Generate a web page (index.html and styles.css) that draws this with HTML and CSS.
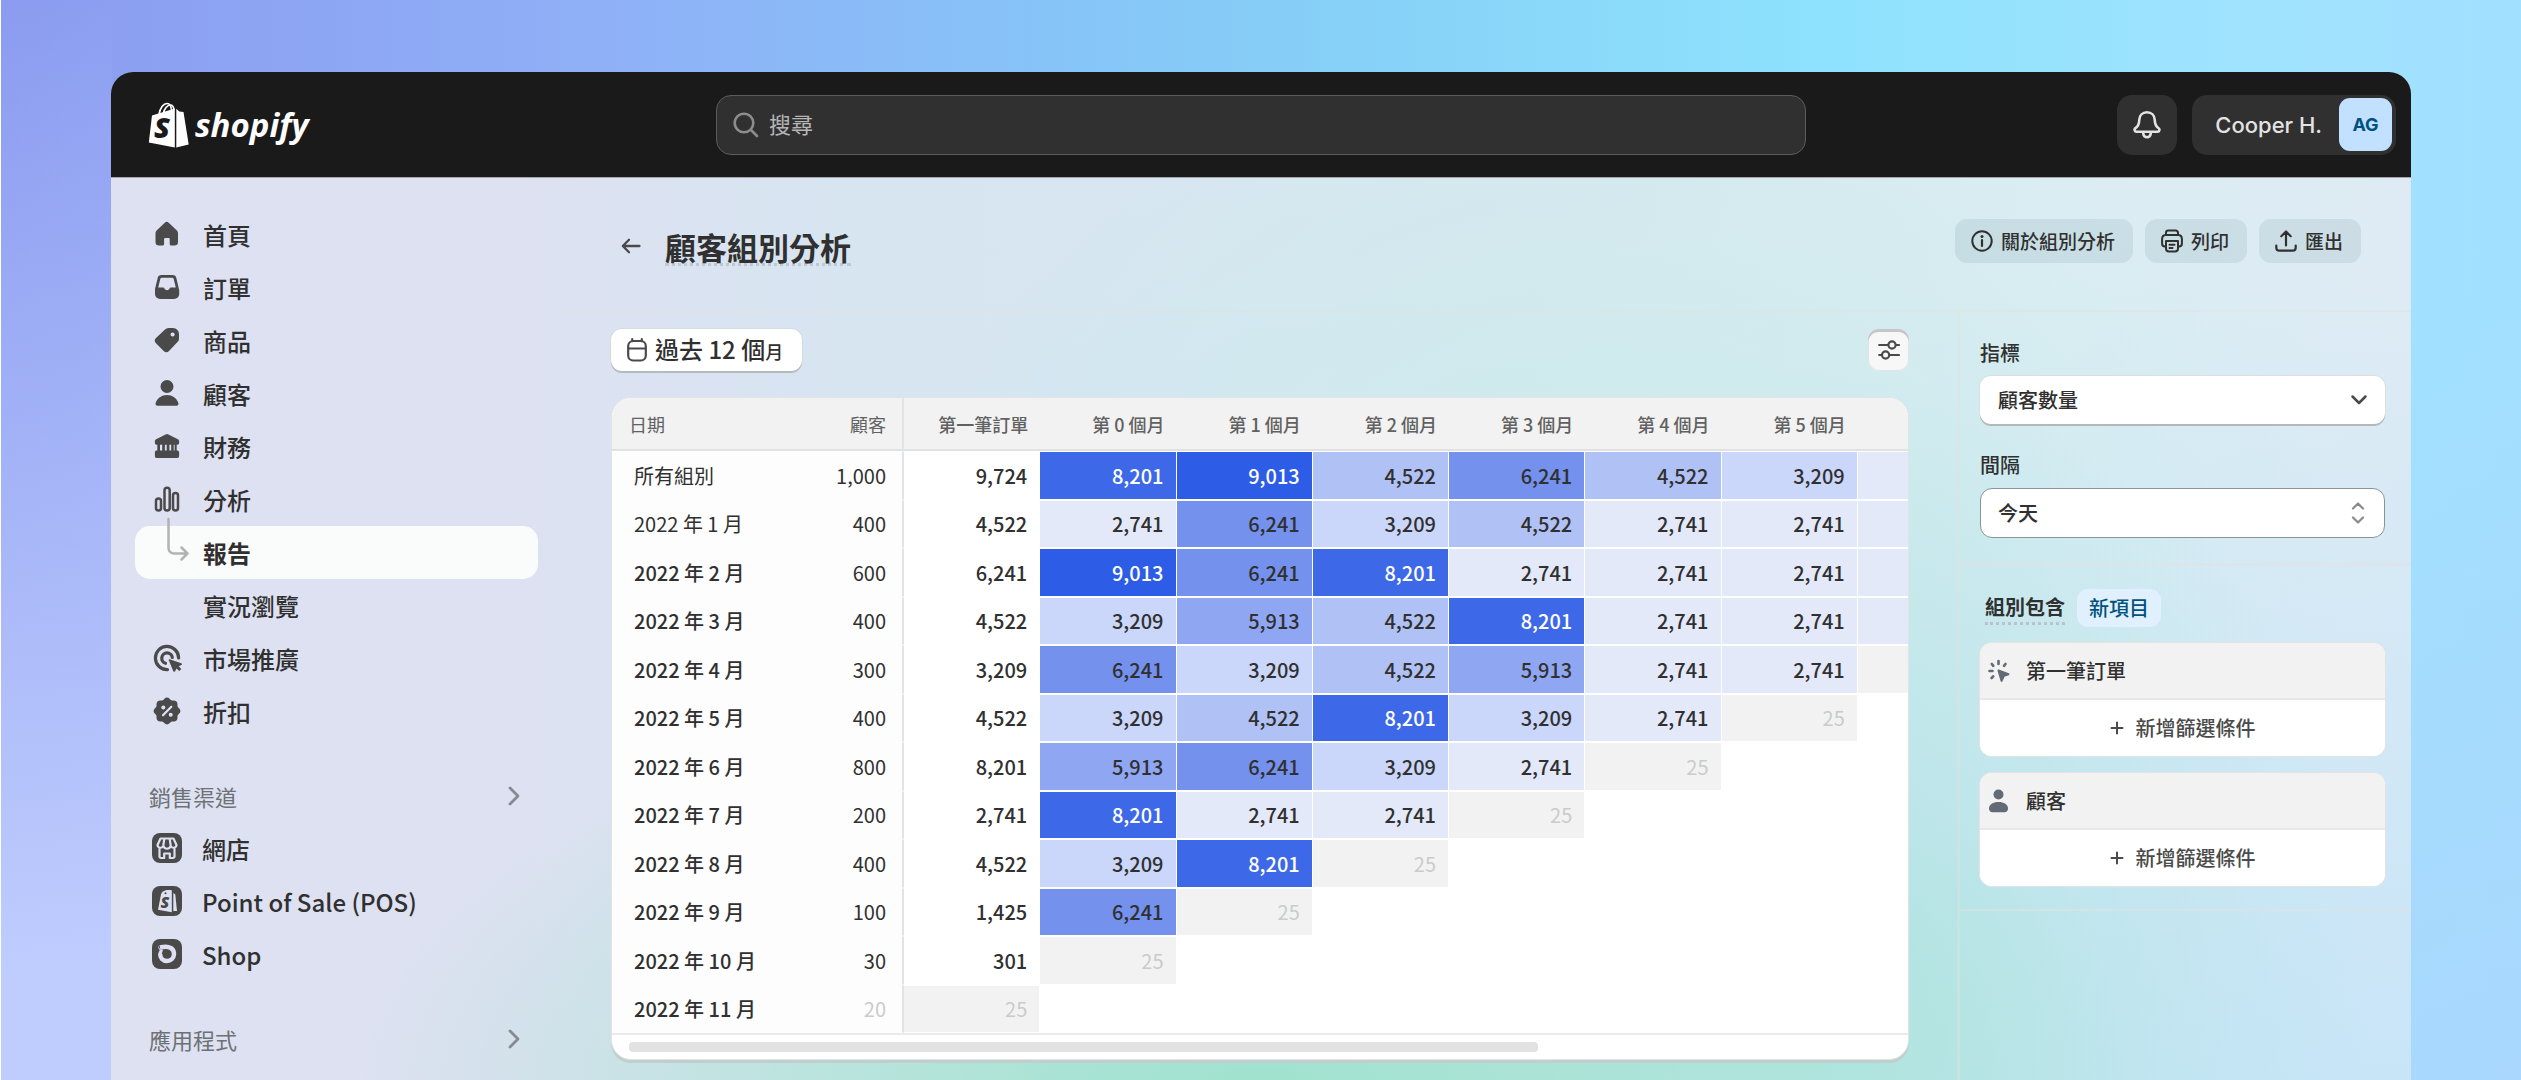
FILE: index.html
```html
<!DOCTYPE html>
<html lang="zh-Hant">
<head>
<meta charset="utf-8">
<title>顧客組別分析</title>
<meta name="viewport" content="width=device-width, initial-scale=1">
<link rel="stylesheet" href="styles.css">
</head>
<body>
<div class="window">
  <header class="topbar">
    <a class="logo" href="#" aria-label="Shopify">
      <svg class="logo-bag" width="42" height="46" viewBox="0 0 42 46">
        <path d="M11 12.500C12 6 15.500 1.500 19 1.500c3 0 4.600 3.300 4.600 9M15.500 11c1-4.500 4-8 6.800-8 2.200 0 3.400 2 3.700 5" fill="none" stroke="#fff" stroke-width="1.700"/>
        <path d="M4 13.500 26.800 6.500V45.500L0.800 40.500z" fill="#fff"/>
        <path d="M28.300 6.800l3 2.700 4.200.6L40.700 42.500 28.300 45.500z" fill="#fff"/>
        <text x="6" y="36" font-size="29" class="logo-s">S</text>
      </svg>
      <span class="logo-word">shopify</span>
    </a>
    <label class="search">
      <svg width="26" height="26" viewBox="0 0 26 26" fill="none" stroke="#8c8c8c" stroke-width="2.600" stroke-linecap="round"><circle cx="11" cy="11" r="9.300"/><path d="M18 18l6 6"/></svg>
      <input type="search" placeholder="搜尋" aria-label="搜尋">
    </label>
    <div class="account">
      <button class="bell" aria-label="通知">
        <svg width="28" height="30" viewBox="0 0 28 30" fill="none" stroke="#e3e3e3" stroke-width="2.600" stroke-linejoin="round"><path d="M14 2.300c-4.600 0-7.500 3.300-7.700 7.500-.2 4.800-1.200 6.800-3.700 8.200-1.700 1-1.200 3.700.9 3.700h21c2.100 0 2.600-2.700.9-3.700-2.500-1.400-3.500-3.400-3.700-8.200C21.500 5.600 18.600 2.300 14 2.300z"/><path d="M10.300 22v1.600a3.700 3.700 0 0 0 7.400 0V22"/></svg>
      </button>
      <button class="user"><span>Cooper H.</span><span class="avatar">AG</span></button>
    </div>
  </header>

  <div class="body">
    <nav class="sidebar" aria-label="主選單">
      <a class="nav-item" href="#"><svg class="icon" viewBox="0 0 26 26"><path d="M10.800 1.800a2.800 2.800 0 0 1 3.900 0l7.700 7.200c1 .9 1.600 2.200 1.600 3.600v8.400a3.600 3.600 0 0 1-3.600 3.600h-3.100a1.600 1.600 0 0 1-1.600-1.600v-5a1 1 0 0 0-1-1h-3.600a1 1 0 0 0-1 1v5a1.600 1.600 0 0 1-1.600 1.600H5.100A3.600 3.600 0 0 1 1.500 21v-8.400c0-1.400.6-2.700 1.600-3.600z"/></svg>首頁</a>
      <a class="nav-item" href="#"><svg class="icon" viewBox="0 0 26 26"><path fill-rule="evenodd" d="M7.500 1h11a4 4 0 0 1 3.900 3.200l2.800 12V20a5 5 0 0 1-5 5H6a5 5 0 0 1-5-5v-5L3.600 4.200A4 4 0 0 1 7.500 1zm.3 2.800a1.600 1.600 0 0 0-1.500 1.300L4.200 13.600h5c.6 0 1 .4 1.200.9a2.800 2.800 0 0 0 5.200 0c.2-.5.600-.9 1.200-.9h5L19.700 5.100a1.600 1.600 0 0 0-1.500-1.300z"/></svg>訂單</a>
      <a class="nav-item" href="#"><svg class="icon" viewBox="0 0 26 26"><path fill-rule="evenodd" d="M14.500 1H19a6 6 0 0 1 6 6v4.500c0 1.300-.5 2.600-1.500 3.500L15 24a3.800 3.800 0 0 1-5.300 0L2 16.300A3.800 3.800 0 0 1 2 11l9-8.500A5 5 0 0 1 14.500 1zM18.600 9.600a2.100 2.100 0 1 0 0-4.200 2.100 2.100 0 0 0 0 4.200z"/></svg>商品</a>
      <a class="nav-item" href="#"><svg class="icon" viewBox="0 0 26 26"><circle cx="13" cy="6.500" r="6.500"/><path d="M1.600 23.200C3.300 18 7.700 15 13 15s9.700 3 11.400 8.200c.4 1.300-.5 2.600-1.900 2.600h-19c-1.400 0-2.300-1.300-1.900-2.600z"/></svg>顧客</a>
      <a class="nav-item" href="#"><svg class="icon" viewBox="0 0 26 26"><path d="M11.600 1.400a3 3 0 0 1 2.800 0l9.500 4.800c.8.400 1.200 1 1.200 1.900v2c0 1-.8 1.700-1.700 1.700H22.700v5.600h.7c1 0 1.700.8 1.700 1.700v4.200c0 1-.8 1.700-1.700 1.700H2.600c-1 0-1.700-.8-1.700-1.700v-4.200c0-1 .8-1.700 1.700-1.700h.7v-5.600h-.7c-1 0-1.700-.8-1.700-1.700v-2c0-.8.4-1.500 1.200-1.900zM6 11.800v5.600h2.200v-5.600zm4.900 0v5.600h1.800v-5.600zm4.500 0v5.600h1.800v-5.600zm4.300 0v5.600h.9v-5.600z" fill-rule="evenodd"/></svg>財務</a>
      <a class="nav-item" href="#"><svg class="icon" viewBox="0 0 26 26"><g fill="none" stroke="#4a4a4a" stroke-width="2.500"><rect x="2" y="12.500" width="5" height="12" rx="2.500"/><rect x="10.500" y="1.800" width="5.200" height="22.700" rx="2.600"/><rect x="19" y="7" width="5" height="17.500" rx="2.500"/></g></svg>分析</a>
      <a class="nav-item sub active" href="#" aria-current="page"><svg class="branch" width="26" height="46" viewBox="0 0 26 46" fill="none" stroke="#b3b3b3" stroke-width="2.500" stroke-linecap="round" stroke-linejoin="round"><path d="M2.500 2v29a5.500 5.500 0 0 0 5.500 5.500h13M15.500 30.500l6 6-6 6"/></svg>報告</a>
      <a class="nav-item sub" href="#">實況瀏覽</a>
      <a class="nav-item" href="#"><svg class="icon" viewBox="0 0 26 26"><g fill="none" stroke="#4a4a4a" stroke-width="3.200" stroke-linecap="round"><path d="M24.600 13A11.600 11.600 0 1 0 13.500 24.600"/><path d="M18.300 12.400A5.300 5.300 0 1 0 11.500 18.300"/></g><path d="M15.600 14.200l11.600 4c1 .4 1 1.500.1 1.900l-2.600 1.200 2.600 2.800-2 2-2.800-2.600-1.400 2.700c-.4.900-1.600.8-1.900-.1l-4.400-10.800c-.3-.8.1-1.300.8-1.100z"/></svg>市場推廣</a>
      <a class="nav-item" href="#"><svg class="icon" viewBox="0 0 26 26"><g transform="translate(13 13)"><rect x="-10.500" y="-10.500" width="21" height="21" rx="4"/><rect x="-10.500" y="-10.500" width="21" height="21" rx="4" transform="rotate(45)"/></g><circle cx="9.300" cy="9.500" r="2" fill="#dde1f1"/><circle cx="16.700" cy="16.700" r="2" fill="#dde1f1"/><path d="M9 17.300L17.300 8.700" stroke="#dde1f1" stroke-width="2.200" stroke-linecap="round"/></svg>折扣</a>

      <a class="nav-section" href="#">銷售渠道<svg width="12" height="20" viewBox="0 0 12 20" fill="none" stroke="#868b8f" stroke-width="2.800" stroke-linecap="round" stroke-linejoin="round"><path d="M2 2l8 8-8 8"/></svg></a>
      <a class="nav-item" href="#"><svg class="icon badge" viewBox="0 0 30 30"><rect width="30" height="30" rx="8"/><path d="M8.500 5.500h13l3 6.500a3 3 0 0 1-5.800.8 3.800 3.800 0 0 1-7.400 0 3 3 0 0 1-5.800-.8zM12.300 6l-1 6.500M17.700 6l1 6.500M7.500 15.500V23.500a1.500 1.500 0 0 0 1.500 1.500h3.200v-4.500h5.600V25H21a1.500 1.500 0 0 0 1.500-1.500v-8" fill="none" stroke="#dde1f1" stroke-width="2.200" stroke-linejoin="round"/></svg>網店</a>
      <a class="nav-item" href="#"><svg class="icon badge" viewBox="0 0 30 30"><rect width="30" height="30" rx="8"/><path d="M9 8.500C10 5 13 3.500 19.800 4.200V26.200L6 23.800z" fill="#dde1f1"/><path d="M21.300 7l2 1.500L25 25h-3.700z" fill="#dde1f1"/><circle cx="13.500" cy="7.300" r="1" /><text x="8.500" y="22" font-size="16" class="pos-s">S</text></svg>Point of Sale (POS)</a>
      <a class="nav-item" href="#"><svg class="icon badge" viewBox="0 0 30 30"><rect width="30" height="30" rx="8"/><path d="M8 8.500C18 6 22.300 10 22 15.500c-.3 3.800-3.300 6.500-7 6.500-4.300 0-7-3-6.800-7.200" fill="none" stroke="#dde1f1" stroke-width="4.400"/><path d="M6 6.500c1 3 2.500 4.500 5 4.300l-1.500 5H6.300c0-2 .5-3.300 1.500-4.600C6.800 10 6 8.500 6 6.500z" fill="#dde1f1"/></svg>Shop</a>

      <a class="nav-section" href="#">應用程式<svg width="12" height="20" viewBox="0 0 12 20" fill="none" stroke="#868b8f" stroke-width="2.800" stroke-linecap="round" stroke-linejoin="round"><path d="M2 2l8 8-8 8"/></svg></a>
    </nav>

    <main class="main">
      <div class="page-head">
        <div class="title-group">
          <a class="back" href="#" aria-label="返回"><svg width="20" height="16" viewBox="0 0 20 16" fill="none" stroke="#4a4a4a" stroke-width="2.300" stroke-linecap="round" stroke-linejoin="round"><path d="M18.500 8H2M8 1.800L1.800 8 8 14.200"/></svg></a>
          <h1>顧客組別分析</h1>
        </div>
        <div class="actions">
          <button class="action"><svg width="22" height="22" viewBox="0 0 22 22" fill="none" stroke="#303030" stroke-width="2"><circle cx="11" cy="11" r="9.700"/><path d="M11 10v6" stroke-width="2.200" stroke-linecap="round"/><circle cx="11" cy="6.500" r="1.500" fill="#303030" stroke="none"/></svg>關於組別分析</button>
          <button class="action"><svg width="22" height="24" viewBox="0 0 22 24" fill="none" stroke="#303030" stroke-width="2" stroke-linecap="round" stroke-linejoin="round"><path d="M5 6V3.800A2.300 2.300 0 0 1 7.300 1.500h7.400A2.300 2.300 0 0 1 17 3.800V6M4 17.500c-2 0-2.900-1-2.900-2.800V10c0-2.500 1.500-4 3.800-4h12.200c2.300 0 3.800 1.500 3.800 4v4.700c0 1.800-.9 2.800-2.900 2.800"/><path d="M5 12h12v7.500a3 3 0 0 1-3 3H8a3 3 0 0 1-3-3zM8.500 15.800h5M8.500 19h3"/></svg>列印</button>
          <button class="action"><svg width="22" height="22" viewBox="0 0 22 22" fill="none" stroke="#303030" stroke-width="2.200" stroke-linecap="round" stroke-linejoin="round"><path d="M11 15.500V2M6.300 6.200L11 1.500l4.700 4.700M1.300 15.500v2.200a3 3 0 0 0 3 3h13.400a3 3 0 0 0 3-3v-2.200"/></svg>匯出</button>
        </div>
      </div>

      <div class="content">
        <section class="report">
          <div class="toolbar">
            <button class="range"><svg width="20" height="24" viewBox="0 0 20 24" fill="none" stroke="#4a4a4a" stroke-width="2.200" stroke-linecap="round"><rect x="1.200" y="3" width="17.600" height="19.500" rx="5"/><path d="M1.500 10.500h17M5.200 1.200v2M14.800 1.200v2"/></svg><span>過去 12 個<small>月</small></span></button>
            <button class="tune" aria-label="設定"><svg width="22" height="22" viewBox="0 0 22 22" fill="none" stroke="#4a4a4a" stroke-width="2.200" stroke-linecap="round"><path d="M1.200 6h9M18 6h3M12 16h9M1.200 16h2.500"/><circle cx="14" cy="6" r="3.600"/><circle cx="7.600" cy="16" r="3.600"/></svg></button>
          </div>
          <div class="card">
            <div class="table-clip">
              <table>
                <thead>
                  <tr><th class="date" scope="col">日期</th><th class="cust" scope="col">顧客</th><th scope="col">第一筆訂單</th><th scope="col">第 0 個月</th><th scope="col">第 1 個月</th><th scope="col">第 2 個月</th><th scope="col">第 3 個月</th><th scope="col">第 4 個月</th><th scope="col">第 5 個月</th><th scope="col">第 6 個月</th></tr>
                </thead>
                <tbody>
                  <tr><td class="date light">所有組別</td><td class="cust">1,000</td><td>9,724</td><td class="l6">8,201</td><td class="l7">9,013</td><td class="l3">4,522</td><td class="l5">6,241</td><td class="l3">4,522</td><td class="l2">3,209</td><td class="l1"></td></tr>
                  <tr><td class="date light">2022 年 1 月</td><td class="cust">400</td><td>4,522</td><td class="l1">2,741</td><td class="l5">6,241</td><td class="l2">3,209</td><td class="l3">4,522</td><td class="l1">2,741</td><td class="l1">2,741</td><td class="l1"></td></tr>
                  <tr><td class="date">2022 年 2 月</td><td class="cust">600</td><td>6,241</td><td class="l7">9,013</td><td class="l5">6,241</td><td class="l6">8,201</td><td class="l1">2,741</td><td class="l1">2,741</td><td class="l1">2,741</td><td class="l1"></td></tr>
                  <tr><td class="date">2022 年 3 月</td><td class="cust">400</td><td>4,522</td><td class="l2">3,209</td><td class="l4">5,913</td><td class="l3">4,522</td><td class="l6">8,201</td><td class="l1">2,741</td><td class="l1">2,741</td><td class="l1"></td></tr>
                  <tr><td class="date">2022 年 4 月</td><td class="cust">300</td><td>3,209</td><td class="l5">6,241</td><td class="l2">3,209</td><td class="l3">4,522</td><td class="l4">5,913</td><td class="l1">2,741</td><td class="l1">2,741</td><td class="none"></td></tr>
                  <tr><td class="date">2022 年 5 月</td><td class="cust">400</td><td>4,522</td><td class="l2">3,209</td><td class="l3">4,522</td><td class="l6">8,201</td><td class="l2">3,209</td><td class="l1">2,741</td><td class="none">25</td><td></td></tr>
                  <tr><td class="date">2022 年 6 月</td><td class="cust">800</td><td>8,201</td><td class="l4">5,913</td><td class="l5">6,241</td><td class="l2">3,209</td><td class="l1">2,741</td><td class="none">25</td><td></td><td></td></tr>
                  <tr><td class="date">2022 年 7 月</td><td class="cust">200</td><td>2,741</td><td class="l6">8,201</td><td class="l1">2,741</td><td class="l1">2,741</td><td class="none">25</td><td></td><td></td><td></td></tr>
                  <tr><td class="date">2022 年 8 月</td><td class="cust">400</td><td>4,522</td><td class="l2">3,209</td><td class="l6">8,201</td><td class="none">25</td><td></td><td></td><td></td><td></td></tr>
                  <tr><td class="date">2022 年 9 月</td><td class="cust">100</td><td>1,425</td><td class="l5">6,241</td><td class="none">25</td><td></td><td></td><td></td><td></td><td></td></tr>
                  <tr><td class="date">2022 年 10 月</td><td class="cust">30</td><td>301</td><td class="none">25</td><td></td><td></td><td></td><td></td><td></td><td></td></tr>
                  <tr><td class="date">2022 年 11 月</td><td class="cust faded">20</td><td class="none">25</td><td></td><td></td><td></td><td></td><td></td><td></td><td></td></tr>
                </tbody>
              </table>
            </div>
            <div class="scroll"><div class="thumb"></div></div>
          </div>
        </section>

        <aside class="panel">
          <div class="fields">
            <label for="metric">指標</label>
            <div class="select plain">
              <select id="metric"><option>顧客數量</option></select>
              <svg width="18" height="12" viewBox="0 0 18 12" fill="none" stroke="#4a4a4a" stroke-width="2.500" stroke-linecap="round" stroke-linejoin="round"><path d="M2.500 2.500L9 9l6.500-6.500"/></svg>
            </div>
            <label for="interval">間隔</label>
            <div class="select outlined">
              <select id="interval"><option>今天</option></select>
              <svg width="18" height="22" viewBox="0 0 18 22" fill="none" stroke="#8a8a8a" stroke-width="2.200" stroke-linecap="round" stroke-linejoin="round"><path d="M4 6.500L9 1.500l5 5M4 15.500l5 5 5-5"/></svg>
            </div>
          </div>
          <div class="cohorts">
            <div class="cohort-head"><h2>組別包含</h2><span class="tag">新項目</span></div>
            <div class="filter">
              <div class="filter-title"><svg width="22" height="24" viewBox="0 0 22 24" fill="none" stroke="#616a75" stroke-width="2.600" stroke-linecap="round"><path d="M10.500 2v3M3.800 5l1.500 1.800M17.500 5L16 6.800M1.500 12h3M3.600 19l1.600-1.700"/><path d="M10.500 11.500l10 3.700-4.600 1.700-2.300 5z" fill="#616a75" stroke-width="2" stroke-linejoin="round"/></svg>第一筆訂單</div>
              <button class="add"><svg width="14" height="14" viewBox="0 0 14 14" stroke="#4a4a4a" stroke-width="2" stroke-linecap="round"><path d="M7 1.500v11M1.500 7h11"/></svg>新增篩選條件</button>
            </div>
            <div class="filter">
              <div class="filter-title"><svg width="22" height="24" viewBox="0 0 22 24" fill="#616a75"><circle cx="10.500" cy="5.500" r="5"/><path d="M1 19.500c0-4 4-6.500 9.500-6.500s9.500 2.500 9.500 6.500c0 2.300-1.400 3.700-3.500 3.700h-12C2.400 23.200 1 21.800 1 19.500z"/></svg>顧客</div>
              <button class="add"><svg width="14" height="14" viewBox="0 0 14 14" stroke="#4a4a4a" stroke-width="2" stroke-linecap="round"><path d="M7 1.500v11M1.500 7h11"/></svg>新增篩選條件</button>
            </div>
          </div>
        </aside>
      </div>
    </main>
  </div>
</div>
</body>
</html>
```

FILE: styles.css
```css
* { box-sizing: border-box; }

body {
  margin: 0;
  height: 100vh;
  overflow: hidden;
  padding: 72px 110px 0;
  border-left: 1px solid #fff;
  font-family: "Noto Sans CJK TC", sans-serif;
  color: #303030;
  background:
    radial-gradient(ellipse 900px 900px at 100% 110%, #aad6fd 0%, rgba(170, 214, 253, 0) 100%),
    linear-gradient(180deg, rgba(194, 207, 255, 0) 0%, rgba(194, 207, 255, .95) 90%) 0 0 / 112px 100% no-repeat,
    linear-gradient(90deg, #8b9bf0 0%, #8fb0f7 24%, #86c4f8 42%, #86cff7 52%, #8ee2fd 72%, #a0e3ff 90%, #a2e0ff 100%);
}

button, input, select { font: inherit; color: inherit; }
button { border: 0; padding: 0; cursor: pointer; }
a { color: inherit; text-decoration: none; }
svg { display: block; flex: none; }

.window {
  min-height: 1020px;
  border-radius: 22px 22px 0 0;
  overflow: hidden;
  background:
    radial-gradient(ellipse 900px 420px at 50% 100%, #9fe2cd 0%, rgba(165, 227, 208, .85) 25%, rgba(170, 226, 220, 0) 100%),
    radial-gradient(ellipse 560px 620px at 74% 90%, rgba(178, 228, 226, .9) 0%, rgba(190, 230, 234, 0) 100%),
    radial-gradient(ellipse 700px 440px at 66% 42%, rgba(204, 236, 236, .9) 0%, rgba(204, 234, 235, 0) 100%),
    linear-gradient(180deg, rgba(200, 229, 248, 0) 20%, #c8e5f8 100%) 100% 0 / 60% 100% no-repeat,
    linear-gradient(90deg, #dde1f1 0%, #dde1f1 18%, #d7e5f1 32%, #d6e7ef 60%, #dbedf3 85%, #deebf4 100%);
}

/* Top bar */
.topbar {
  display: grid;
  grid-template-columns: 1fr minmax(0, 1090px) 1fr;
  align-items: center;
  height: 106px;
  padding: 0 15px;
  border-bottom: 1px solid #a8a3a8;
  background: #1a1a1a;
}
.logo { display: flex; align-items: center; gap: 5px; padding-left: 22px; color: #fff; }
.logo-s, .pos-s { font-family: "Open Sans", sans-serif; font-weight: 800; font-style: italic; }
.logo-s { fill: #1a1a1a; }
.pos-s { fill: #4a4a4a; }
.logo-word { font: italic 700 33px/46px "Open Sans", sans-serif; }
.search {
  display: flex;
  align-items: center;
  gap: 10px;
  height: 60px;
  padding: 0 16px;
  border: 1px solid #5c5c5c;
  border-radius: 15px;
  background: #303030;
}
.search input { flex: 1; min-width: 0; border: 0; padding: 0 0 3px; outline: 0; background: none; color: #b5b5b5; font-size: 22px; line-height: 32px; }
.search input::placeholder { color: #b5b5b5; opacity: 1; }
.account { display: flex; justify-content: flex-end; gap: 15px; }
.bell { display: grid; place-items: center; width: 60px; height: 60px; border-radius: 15px; background: #303030; }
.user {
  display: flex;
  align-items: center;
  gap: 17px;
  height: 60px;
  padding: 0 4px 0 23px;
  border-radius: 15px;
  background: #303030;
  color: #e3e3e3;
  font: 500 22px/32px Inter, sans-serif;
}
.avatar { display: grid; place-items: center; width: 53px; height: 53px; border-radius: 11px; background: #c2e0ff; color: #00527c; font-size: 18px; font-weight: 700; }

.body { display: grid; grid-template-columns: 451px minmax(0, 1fr); min-height: 915px; }

/* Sidebar */
.sidebar { padding: 30px 24px 0; }
.nav-item { display: flex; align-items: center; height: 53px; gap: 23px; padding-left: 19px; border-radius: 15px; font-size: 24px; line-height: 36px; font-weight: 500; }
.icon { width: 26px; height: 26px; margin-bottom: 2px; fill: #4a4a4a; overflow: visible; }
.icon.badge { width: 30px; height: 30px; margin: 0 -3px 1px -2px; }
.sub { position: relative; padding-left: 68px; }
.active { background: #fafbfb; font-weight: 700; }
.branch { position: absolute; left: 31px; top: -9px; }
.nav-section { display: flex; align-items: center; justify-content: space-between; height: 53px; margin-top: 31px; padding: 0 18px 0 14px; color: #6d7175; font-size: 22px; line-height: 32px; }

/* Page header */
.page-head { display: flex; justify-content: space-between; align-items: flex-start; height: 134px; padding: 41px 50px 0 59px; border-bottom: 2px solid rgba(226, 226, 226, .5); }
.title-group { display: flex; align-items: center; gap: 24px; padding-top: 12px; }
.back { padding-bottom: 5px; }
h1 { margin: 0; border-bottom: 3px dotted rgba(140, 145, 150, .35); font-size: 31px; line-height: 32px; font-weight: 700; }
.actions { display: flex; gap: 12px; }
.action { display: flex; align-items: center; gap: 8px; height: 44px; padding: 0 18px 0 16px; border-radius: 12px; background: rgba(0, 50, 60, .08); font-size: 19px; line-height: 28px; font-weight: 500; }

.content { display: grid; grid-template-columns: minmax(0, 1fr) 454px; }

/* Report */
.report { padding: 17px 48px 0 49px; }
.toolbar { display: flex; justify-content: space-between; align-items: center; margin-bottom: 26px; }
.range { display: flex; align-items: center; gap: 8px; height: 42px; padding: 0 19px 0 16px; border-radius: 11px; background: #fff; box-shadow: 0 2px 0 #b5bcc0, 0 0 0 1px rgba(210, 210, 210, .5); font-size: 24px; line-height: 36px; font-weight: 500; }
.range small { font-size: 18px; }
.tune { display: grid; place-items: center; width: 41px; height: 42px; border-radius: 11px; background: #f7f7f7; box-shadow: inset 0 3px 0 #c4c6c7, inset 0 0 0 1px #e3e3e3; }

.card { border: 1px solid #e1e3e4; border-radius: 20px; overflow: hidden; background: #fff; box-shadow: 0 3px 0 #c0cfce; }
.table-clip { overflow: hidden; border-bottom: 2px solid #ebebeb; }
table { width: calc(100% + 86px); table-layout: fixed; border-collapse: separate; border-spacing: 0; }
th { height: 53px; padding: 0 12px 0 0; border-bottom: 2px solid #dfe1e3; background: #f2f2f2; color: #616161; font-size: 18px; line-height: 26px; font-weight: 500; text-align: right; }
td { height: 49px; padding: 0 12px 0 0; border: 1px solid #fff; border-left-width: 0; background-clip: padding-box; font-size: 20px; line-height: 30px; font-weight: 500; text-align: right; }
tr:nth-child(even) td { height: 48px; }
.date { width: 170px; text-align: left; }
th.date { padding-left: 17px; font-weight: 400; }
td.date { padding-left: 22px; }
td.date, td.cust { border-color: #fdfdfd; background: #fdfdfd; }
.cust { width: 122px; padding-right: 16px; border-right: 2px solid #e1e3e4; font-weight: 400; }
td.cust { border-right: 2px solid #e1e3e4; }
td.light { font-weight: 400; }
.l1 { background-color: #e4e9fa; }
.l2 { background-color: #cad6fa; }
.l3 { background-color: #b0c2f5; }
.l4 { background-color: #8fa7f2; }
.l5 { background-color: #7491ee; }
.l6 { background-color: #3d69e8; color: #fff; }
.l7 { background-color: #2d5ce6; color: #fff; }
.none { background-color: #f2f2f2; color: #c9cbcc; font-weight: 400; }
td.faded { color: #c9cbcc; }
.scroll { padding: 7px 17px; }
.thumb { width: 72%; height: 10px; border-radius: 4px; background: #e2e2e2; }

/* Settings panel */
.panel { min-height: 780px; border-left: 3px solid rgba(226, 226, 226, .4); }
.fields { padding: 29px 26px 25px 20px; border-bottom: 3px solid rgba(226, 226, 226, .5); }
.fields label { display: block; margin-bottom: 11px; font-size: 20px; line-height: 24px; font-weight: 500; }
.select { display: grid; align-items: center; height: 48px; border-radius: 11px; background: #fff; }
.select select, .select svg { grid-area: 1 / 1; }
.select svg { justify-self: end; margin-right: 17px; pointer-events: none; }
.select select { appearance: none; width: 100%; height: 100%; padding: 0 48px 0 18px; border: 0; border-radius: 11px; background: none; font-size: 20px; line-height: 30px; font-weight: 500; }
.plain { margin-bottom: 29px; box-shadow: 0 2px 0 #b3b8bb, 0 0 0 1px rgba(220, 220, 220, .7); }
.outlined { border: 1px solid #8a9396; height: 50px; border-radius: 12px; }
.outlined select { padding-left: 17px; }
.cohorts { padding: 23px 25px 22px 19px; border-bottom: 2px solid rgba(226, 226, 226, .5); }
.cohort-head { display: flex; align-items: center; gap: 12px; padding-left: 6px; }
h2 { margin: 0; border-bottom: 3px dotted #b9c3cc; font-size: 20px; line-height: 30px; font-weight: 700; }
.tag { padding: 4px 12px; border-radius: 11px; background: #e0f0ff; color: #00527c; font-size: 20px; line-height: 30px; font-weight: 500; }
.filter { margin-top: 15px; border: 1px solid #e3e3e3; border-radius: 13px; overflow: hidden; background: #fff; }
.filter-title { display: flex; align-items: center; gap: 16px; height: 57px; padding-left: 8px; border-bottom: 2px solid #e8e8e8; background: #f2f2f2; font-size: 20px; line-height: 30px; font-weight: 500; }
.add { display: flex; align-items: center; justify-content: center; gap: 12px; width: 100%; height: 56px; background: #fff; font-size: 20px; line-height: 30px; color: #4a4a4a; font-weight: 500; }
```
